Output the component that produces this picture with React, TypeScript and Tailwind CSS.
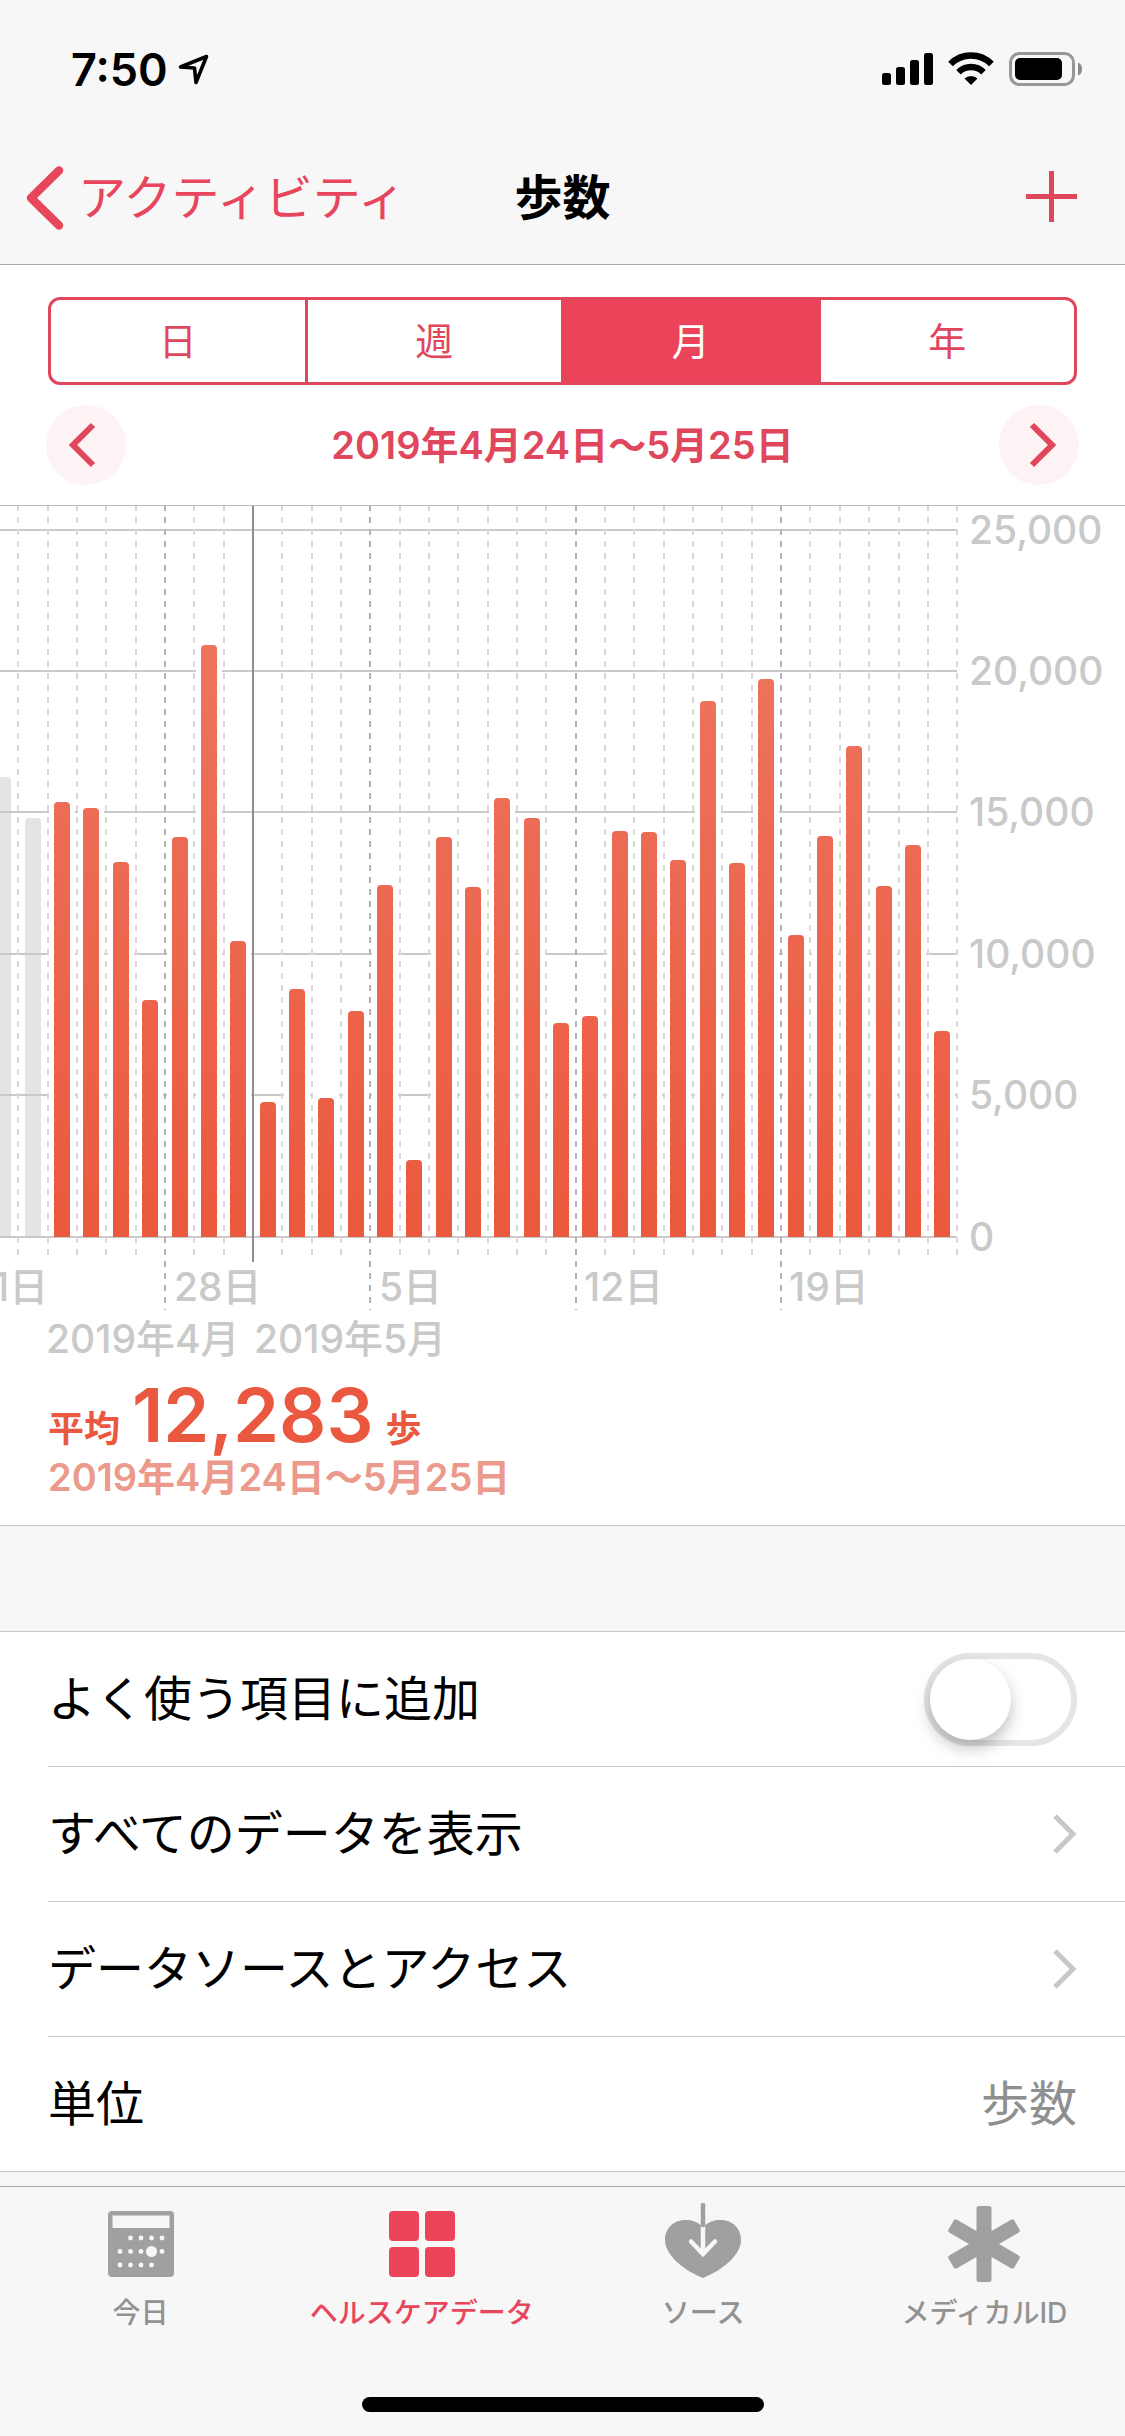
import React, { useState } from "react";

const CHART_TOP = 505;
const BASELINE = 1237;
const CELL = 29.34;
const FIRST_LINE = 18.3;

const ranges = ["日", "週", "月", "年"];

const yLabels = [
  { text: "25,000", y: 530 },
  { text: "20,000", y: 671 },
  { text: "15,000", y: 812 },
  { text: "10,000", y: 954 },
  { text: "5,000", y: 1095 },
  { text: "0", y: 1237 },
];

const xLabels = [
  { text: "21日", x: -31 },
  { text: "28日", x: 174 },
  { text: "5日", x: 379 },
  { text: "12日", x: 584 },
  { text: "19日", x: 789 },
];

// top edge of every bar, one per day
const previousBars = [777, 818];
const bars = [
  802, 808, 862, 1000, 837, 645, 941, 1102, 989, 1098, 1011, 885, 1160, 837,
  887, 798, 818, 1023, 1016, 831, 832, 860, 701, 863, 679, 935, 836, 746, 886,
  845, 1031,
];

const barPath = (x: number, top: number) =>
  `M${x} ${BASELINE}V${top + 4}q0 -4 4 -4h8q4 0 4 4V${BASELINE}z`;

const Chart = () => {
  const lines = Array.from({ length: 33 }, (_, i) =>
    Math.round(FIRST_LINE + i * CELL)
  );
  const barX = (day: number) => Math.round(FIRST_LINE + day * CELL + 6.5);
  return (
    <svg
      viewBox="0 505 1125 860"
      className="block w-full h-auto"
      role="img"
      aria-label="歩数"
    >
      <defs>
        <linearGradient
          id="bar"
          gradientUnits="userSpaceOnUse"
          x1="0"
          y1="505"
          x2="0"
          y2="1237"
        >
          <stop offset="0" stopColor="#ee7a66" />
          <stop offset="1" stopColor="#eb593e" />
        </linearGradient>
      </defs>
      {previousBars.map((top, i) => (
        <path key={i} d={barPath(barX(i - 1), top)} fill="#e4e4e4" />
      ))}
      {yLabels.map(({ text, y }) => (
        <rect key={text} x="0" y={y - 1} width="957" height="2" fill="#c9c9c9" />
      ))}
      {bars.map((top, i) => (
        <rect
          key={i}
          x={barX(i + 1) - 5}
          y={top - 5}
          width="26"
          height={BASELINE - 3 - top}
          fill="#fff"
        />
      ))}
      {lines.map((x, i) => {
        if (i === 8) {
          return (
            <path key={x} d={`M${x} ${CHART_TOP}V1262`} stroke="#8e8e8e" strokeWidth="2" />
          );
        }
        const isWeek = i % 7 === 5;
        return (
          <path
            key={x}
            d={`M${x} ${CHART_TOP}V${isWeek ? 1310 : 1255}`}
            stroke={isWeek ? "#b4b4b4" : "#d9d9d9"}
            strokeWidth="2"
            strokeDasharray="6 6"
          />
        );
      })}
      {bars.map((top, i) => (
        <path key={i} d={barPath(barX(i + 1), top)} fill="url(#bar)" />
      ))}
      <g className="font-medium text-[39px]" fill="#c9c9c9">
        {yLabels.map(({ text, y }) => (
          <text key={text} x="969" y={y + 14}>
            {text}
          </text>
        ))}
        {xLabels.map(({ text, x }) => (
          <text key={text} x={x} y="1301">
            {text}
          </text>
        ))}
        <text x="46" y="1353">2019年4月</text>
        <text x="254" y="1353">2019年5月</text>
      </g>
      <rect x="0" y="505" width="1125" height="1" fill="#bcbcbc" />
    </svg>
  );
};

const StatusBar = () => (
  <div className="h-[132px] pt-1.5 pl-[71px] pr-[42px] flex items-center justify-between">
    <div className="flex items-center gap-2.5">
      <span className="text-[45px] leading-none font-semibold">7:50</span>
      <svg width="31" height="31" viewBox="0 0 31 31" fill="none">
        <path
          d="M28.500 2.500L2.500 13L16.500 14L18 28.500z"
          stroke="#000"
          strokeWidth="3.600"
          strokeLinejoin="round"
        />
      </svg>
    </div>
    <svg width="201" height="34" viewBox="0 0 201 34">
      <rect x="0" y="21" width="9" height="12" rx="2.500" />
      <rect x="14" y="15" width="9" height="18" rx="2.500" />
      <rect x="28" y="8" width="9" height="25" rx="2.500" />
      <rect x="42" y="1" width="9" height="32" rx="2.500" />
      <g fill="none" stroke="#000" strokeWidth="6.500">
        <path d="M68.500 12a29 29 0 0 1 41 0" />
        <path d="M76.500 20.200a17.800 17.800 0 0 1 25 0" />
      </g>
      <path d="M82.500 26.500a9.500 9.500 0 0 1 13 0L89 33z" />
      <rect
        x="128.500"
        y="1.500"
        width="63"
        height="31"
        rx="9"
        fill="none"
        stroke="#979797"
        strokeWidth="3"
      />
      <rect x="133" y="6" width="47" height="22" rx="5" />
      <path d="M196 10.500q4 1.500 4 6.500t-4 6.500z" fill="#8a8a8a" />
    </svg>
  </div>
);

const NavBar = () => (
  <div className="h-[132px] px-[26px] grid grid-cols-3 items-center">
    <a href="#activity" className="flex items-center gap-3.5 text-[#e8465c] text-[48px] leading-none whitespace-nowrap">
      <svg width="38" height="64" viewBox="0 0 38 64" fill="none" className="shrink-0">
        <path
          d="M33 4.500L5 32L33 59.500"
          stroke="currentColor"
          strokeWidth="8.500"
          strokeLinecap="round"
          strokeLinejoin="round"
        />
      </svg>
      アクティビティ
    </a>
    <h1 className="text-center text-[48px] leading-none font-semibold">歩数</h1>
    <button aria-label="追加" className="justify-self-end pr-[22px] pb-1 text-[#e0465c]">
      <svg width="51" height="51" viewBox="0 0 51 51" fill="currentColor">
        <rect x="23" width="5" height="51" />
        <rect y="23" width="51" height="5" />
      </svg>
    </button>
  </div>
);

const ArrowButton = ({ label, path, className }: { label: string; path: string; className: string }) => (
  <button
    aria-label={label}
    className={`size-20 rounded-full bg-[#fdf3f4] flex items-center justify-center ${className}`}
  >
    <svg width="30" height="46" viewBox="0 0 30 46" fill="none">
      <path d={path} stroke="#e0465c" strokeWidth="6" />
    </svg>
  </button>
);

const Chevron = () => (
  <svg width="25" height="42" viewBox="0 0 25 42" fill="none">
    <path d="M3 3L21 21L3 39" stroke="#c7c7cc" strokeWidth="5" />
  </svg>
);

const rowClass = "ml-12 pr-12 h-[135px] flex items-center justify-between border-b border-[#c8c7cc]";

const tabs = [
  {
    label: "今日",
    icon: (
      <>
        <path
          fillRule="evenodd"
          d="M11 8h58q4 0 4 4v58q0 4-4 4H11q-4 0-4-4V12q0-4 4-4zM11.500 12.500v12.500h57V12.500z"
        />
        <g fill="#f7f7f7">
          {[29.5, 40, 50.5, 61].map((x) => (
            <circle key={x} cx={x} cy="35" r="2.400" />
          ))}
          {[19, 29.5, 40, 61].map((x) => (
            <circle key={x} cx={x} cy="48.500" r="2.400" />
          ))}
          <circle cx="50.500" cy="48.500" r="5.500" />
          {[19, 29.5, 40, 50.5].map((x) => (
            <circle key={x} cx={x} cy="62" r="2.400" />
          ))}
        </g>
      </>
    ),
  },
  {
    label: "ヘルスケアデータ",
    active: true,
    icon: (
      <>
        <rect x="7" y="8" width="30" height="30" rx="4" />
        <rect x="43" y="8" width="30" height="30" rx="4" />
        <rect x="7" y="44" width="30" height="30" rx="4" />
        <rect x="43" y="44" width="30" height="30" rx="4" />
      </>
    ),
  },
  {
    label: "ソース",
    icon: (
      <>
        <path d="M40 24C47 17 54 17 58 17C70 17 78 26 78 37C78 50 64 65 40 75C16 65 2 50 2 37C2 26 10 17 22 17C26 17 33 17 40 24z" />
        <path
          d="M40 24V50M28 38.500L40 51L52 38.500"
          fill="none"
          stroke="#f7f7f7"
          strokeWidth="4.500"
          strokeLinecap="round"
        />
        <path d="M40 2V22" stroke="currentColor" strokeWidth="4.500" strokeLinecap="round" />
      </>
    ),
  },
  {
    label: "メディカルID",
    icon: (
      <>
        <rect x="32.500" y="3" width="15" height="76" rx="2.500" />
        <rect x="32.500" y="3" width="15" height="76" rx="2.500" transform="rotate(60 40 41)" />
        <rect x="32.500" y="3" width="15" height="76" rx="2.500" transform="rotate(-60 40 41)" />
      </>
    ),
  },
];

const TabBar = () => (
  <footer className="mt-auto border-t border-[#a9a9a9] bg-[#f7f7f7] pt-4 pb-6">
    <nav className="grid grid-cols-4">
      {tabs.map(({ label, icon, active }) => (
        <a
          key={label}
          href="#tab"
          className={`flex flex-col items-center gap-2.5 ${
            active ? "text-[#e8465c]" : "text-[#929292]"
          }`}
        >
          <svg
            width="80"
            height="80"
            viewBox="0 0 80 80"
            fill="currentColor"
            className={active ? "text-[#eb445a]" : "text-[#a0a0a0]"}
          >
            {icon}
          </svg>
          <span className="text-[28px] leading-10 font-medium whitespace-nowrap">{label}</span>
        </a>
      ))}
    </nav>
    <div className="mt-16 mx-auto h-[15px] w-[402px] rounded-full bg-black"></div>
  </footer>
);

const App = () => {
  const [range, setRange] = useState("月");
  const [favorite, setFavorite] = useState(false);
  return (
    <div
      lang="ja"
      className="min-h-screen flex flex-col bg-[#f6f6f6] text-black font-[Inter,'Noto_Sans_CJK_JP',sans-serif]"
    >
      <header className="bg-[#f7f7f7] border-b border-[#a9a9a9]">
        <StatusBar />
        <NavBar />
      </header>
      <main>
        <section className="bg-white border-b border-[#c8c7cc]">
          <div className="pt-8 px-12 flex">
            {ranges.map((item) => (
              <button
                key={item}
                aria-pressed={item === range}
                onClick={() => setRange(item)}
                className={`flex-1 h-[88px] border-[3px] border-[#e0465c] -ml-[3px] first:ml-0 first:rounded-l-xl last:rounded-r-xl text-[38px] leading-none ${
                  item === range ? "bg-[#eb445a] text-white" : "text-[#e0465c]"
                }`}
              >
                {item}
              </button>
            ))}
          </div>
          <div className="py-5 px-[46px] flex items-center justify-between">
            <ArrowButton label="前の月" path="M26 3L6 23L26 43" className="pr-2" />
            <p className="text-[38px] leading-none font-semibold text-[#e0465c]">
              2019年4月24日〜5月25日
            </p>
            <ArrowButton label="次の月" path="M4 3L24 23L4 43" className="pl-2" />
          </div>
          <Chart />
          <div className="px-12 pt-3.5 pb-[22px] font-semibold">
            <p className="flex items-baseline gap-3 leading-none text-[#ea5840] text-[36px]">
              平均
              <strong className="text-[74px] leading-[72px] font-semibold">12,283</strong>
              歩
            </p>
            <p className="text-[38px] leading-[52px] text-[#eb9a8c]">
              2019年4月24日〜5月25日
            </p>
          </div>
        </section>
        <section className="mt-[105px] bg-white border-y border-[#c8c7cc] text-[48px] leading-none">
          <div className={rowClass}>
            <label htmlFor="favorite">よく使う項目に追加</label>
            <input
              id="favorite"
              type="checkbox"
              role="switch"
              checked={favorite}
              onChange={(e) => setFavorite(e.target.checked)}
              className="appearance-none flex w-[153px] h-[93px] border-6 border-[#e5e5e5] rounded-full checked:justify-end checked:bg-[#4cd964] before:block before:size-[81px] before:rounded-full before:bg-white before:shadow-[0_8px_16px_rgba(0,0,0,0.25)]"
            />
          </div>
          <a href="#all-data" className={rowClass}>
            すべてのデータを表示
            <Chevron />
          </a>
          <a href="#sources" className={rowClass}>
            データソースとアクセス
            <Chevron />
          </a>
          <div className="ml-12 pr-12 h-[134px] flex items-center justify-between">
            <span>単位</span>
            <span className="text-[#8f8f8f]">歩数</span>
          </div>
        </section>
      </main>
      <TabBar />
    </div>
  );
};

export default App;
